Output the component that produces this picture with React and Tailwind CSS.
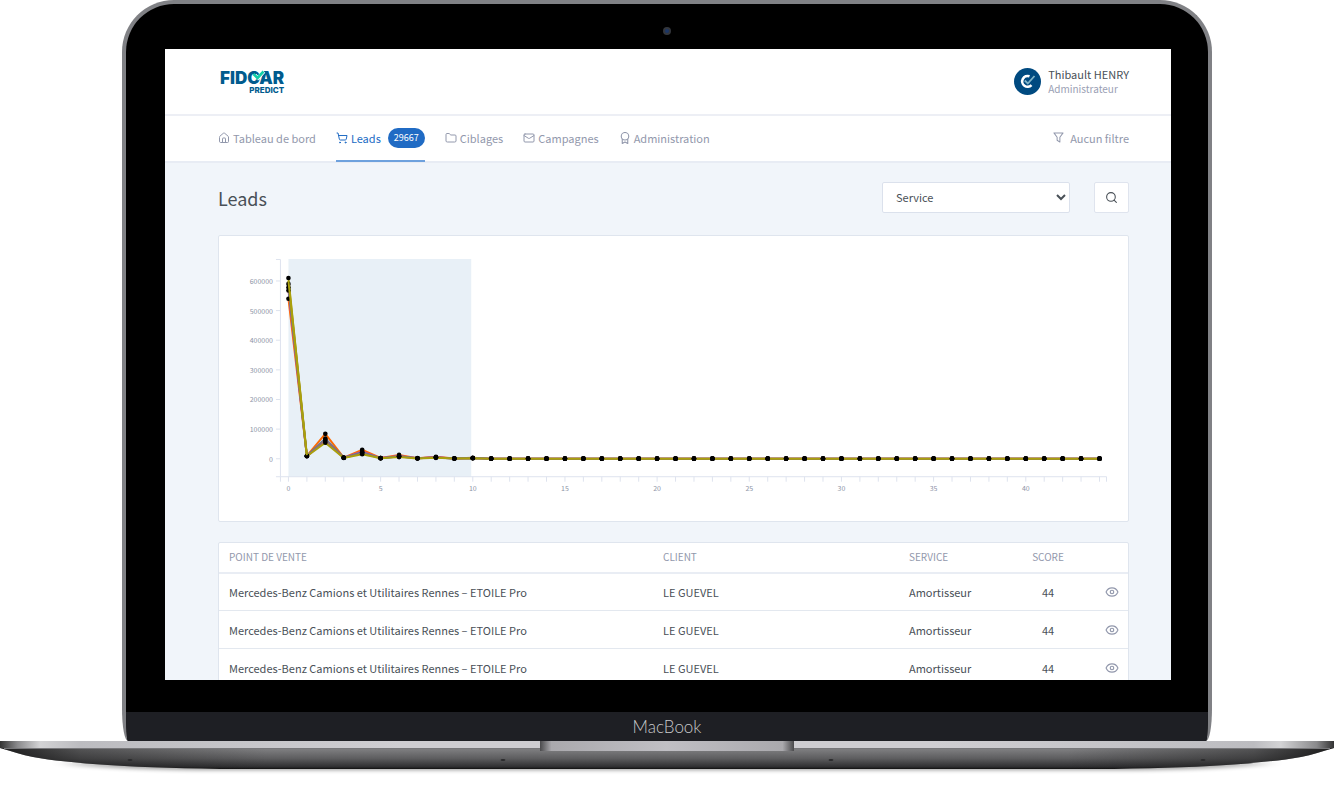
import { useState } from "react";
import { House, ShoppingCart, Folder, Mail, Search, Eye } from "lucide-react";

const tabs = [
  { id: "dashboard", label: "Tableau de bord", icon: House },
  { id: "leads", label: "Leads", icon: ShoppingCart, count: 29667 },
  { id: "targets", label: "Ciblages", icon: Folder },
  { id: "campaigns", label: "Campagnes", icon: Mail },
  { id: "admin", label: "Administration", icon: AwardIcon },
];

const leads = [1, 2, 3].map((id) => ({
  id,
  dealer: "Mercedes-Benz Camions et Utilitaires Rennes – ETOILE Pro",
  client: "LE GUEVEL",
  service: "Amortisseur",
  score: 44,
}));

// Leads per score, first values of each series. The tail is flat.
const series = [
  { color: "#ff6a00", values: [540000, 9500, 84000, 4000, 30000, 2500, 13000, 2000, 6500, 1200, 3500] },
  { color: "#e0409a", values: [568000, 9000, 60000, 3500, 24000, 2200, 9000, 1500, 5000, 1000, 2500] },
  { color: "#4b7fa3", values: [578000, 9000, 68000, 3500, 22000, 2000, 8500, 1500, 4500, 1000, 2200] },
  { color: "#8a6f7a", values: [590000, 9000, 65000, 3200, 19000, 2000, 7500, 1300, 4000, 900, 2000] },
  { color: "#aaa00c", values: [610000, 8500, 54000, 2800, 15000, 1500, 5500, 1000, 3000, 600, 1500] },
];

const X0 = 69.5;
const Y0 = 223;
const MAX_SCORE = 44;
const scores = Array.from({ length: MAX_SCORE + 1 }, (_, i) => i);
const px = (score) => X0 + (score * 812) / MAX_SCORE;
const py = (count) => Y0 - (count * 178) / 600000;

function AwardIcon({ size = 12 }) {
  return (
    <svg width={size} height={size} viewBox="0 0 24 24" fill="none" stroke="currentColor" strokeWidth="2.2" strokeLinejoin="round">
      <circle cx="12" cy="8.5" r="7.5" />
      <path d="M6.5 13.5V23l5.5-3 5.5 3v-9.5" />
    </svg>
  );
}

function FunnelIcon() {
  return (
    <svg width="11" height="11" viewBox="0 0 24 24" fill="none" stroke="currentColor" strokeWidth="2.2" strokeLinejoin="round">
      <path d="M2 2h20l-7 9.5V22l-6-4v-6.5z" />
    </svg>
  );
}

function Logo() {
  return (
    <a href="#" aria-label="Fidcar Predict" className="relative flex flex-col items-end font-[Inter,sans-serif] text-[#005b8e]">
      <span className="text-[17px] leading-4 font-black">FIDCAR</span>
      <span className="text-[8px] leading-2 font-extrabold">PREDICT</span>
      <svg width="15" height="11" viewBox="0 0 15 11" fill="none" className="absolute top-0 left-8">
        <path d="M3 5l3 3L12 1.5" stroke="#fff" strokeWidth="3.4" />
        <path d="M1.5 4l4 4L11.5 1.5" stroke="#12cfa8" strokeWidth="2.6" />
      </svg>
    </a>
  );
}

function Avatar() {
  return (
    <svg width="27" height="27" viewBox="0 0 27 27" fill="none">
      <circle cx="13.5" cy="13.5" r="13.5" fill="#004a80" />
      <path d="M15.5 8.3a5.4 5.4 0 1 0 2 8.8" stroke="#fff" strokeWidth="2.6" />
      <path d="M10.8 12.5l3 3L20.5 8" stroke="#7fb4c8" strokeWidth="1.8" />
    </svg>
  );
}

function ScoreChart() {
  return (
    <svg viewBox="0 0 910 285" className="block w-full" role="img" aria-label="Leads par score">
      <rect x="69.5" y="23" width="183" height="218" fill="#e8f0f7" />

      {/* Axes */}
      <g stroke="#dee3ee" fill="none">
        <path d="M57 23.5h4.5v217.5" />
        <path d="M57 241h831.5v5M61.5 241v5" />
        {[0, 1, 2, 3, 4, 5, 6].map((n) => (
          <path key={n} d={`M57 ${py(n * 100000)}h4.5`} />
        ))}
        {scores.map((s) => (
          <path key={s} d={`M${px(s)} 241v5`} />
        ))}
      </g>
      <g fill="#8d93a6" fontSize="7">
        {[0, 1, 2, 3, 4, 5, 6].map((n) => (
          <text key={n} x="54" y={py(n * 100000) + 3} textAnchor="end">
            {n * 100000}
          </text>
        ))}
        {scores.filter((s) => s % 5 === 0).map((s) => (
          <text key={s} x={px(s)} y="255" textAnchor="middle">
            {s}
          </text>
        ))}
      </g>

      {/* Series */}
      {series.map(({ color, values }) => (
        <polyline
          key={color}
          points={scores.map((s) => `${px(s)},${py(values[s] ?? 300)}`).join(" ")}
          fill="none"
          stroke={color}
          strokeWidth="2"
        />
      ))}
      {series.map(({ color, values }) =>
        scores.map((s) => <circle key={`${color}${s}`} cx={px(s)} cy={py(values[s] ?? 300)} r="2.3" />)
      )}
      <path d={`M${px(0)} ${py(600000)}L${px(1)} ${py(12000)}`} stroke="#aaa00c" strokeWidth="2" />
    </svg>
  );
}

function Dashboard() {
  const [active, setActive] = useState("leads");

  return (
    <div className="h-[631px] overflow-hidden bg-[#f1f5fa] text-[11px] leading-4 text-[#495057]">
      {/* Header */}
      <header className="flex h-[67px] items-center justify-between border-b-2 border-[#edeff5] bg-white pr-[42px] pl-[55px]">
        <Logo />
        <div className="flex items-center gap-[7px]">
          <Avatar />
          <div>
            <p className="leading-[15px]">Thibault HENRY</p>
            <p className="text-[10px] leading-[14px] text-[#9aa0b4]">Administrateur</p>
          </div>
        </div>
      </header>

      {/* Navigation */}
      <nav className="flex h-[47px] items-stretch justify-between border-b-2 border-[#e8ecf4] bg-white pr-[42px] pl-[53px] text-[#9298ac]">
        <div className="flex gap-5">
          {tabs.map(({ id, label, icon: Icon, count }) => (
            <button
              key={id}
              type="button"
              onClick={() => setActive(id)}
              className={`-mb-px flex items-center gap-[3px] border-b-2 ${
                active === id ? "border-[#6ea1dd] text-[#206bc4]" : "border-transparent"
              }`}
            >
              <Icon size={12} />
              {label}
              {count && (
                <span className="ml-1 rounded-full bg-[#206bc4] px-[6px] text-[9px] leading-5 text-white">{count}</span>
              )}
            </button>
          ))}
        </div>
        <button type="button" className="flex items-center gap-[6px] border-b-2 border-transparent">
          <FunnelIcon />
          Aucun filtre
        </button>
      </nav>

      <main className="pr-[42px] pl-[53px]">
        {/* Title and search */}
        <div className="flex items-center pt-[19px] pb-[22px]">
          <h1 className="flex-1 text-[18px] leading-6">Leads</h1>
          <select
            aria-label="Service"
            defaultValue="service"
            className="mr-6 h-[31px] w-[188px] rounded-xs border border-[#dbe1ec] bg-white pb-[2px] pl-[9px]"
          >
            <option value="service">Service</option>
          </select>
          <button
            type="button"
            aria-label="Rechercher"
            className="flex h-[31px] w-[35px] items-center justify-center rounded-xs border border-[#dfe4ee] bg-white"
          >
            <Search size={13} />
          </button>
        </div>

        {/* Chart */}
        <section className="rounded-xs border border-[#dfe5ee] bg-white">
          <ScoreChart />
        </section>

        {/* Leads table */}
        <section className="mt-5 rounded-xs border border-[#dfe5ee] bg-white">
          <table className="w-full table-fixed text-left">
            <colgroup>
              <col />
              <col className="w-[246px]" />
              <col className="w-[115px]" />
              <col className="w-[68px]" />
              <col className="w-[46px]" />
            </colgroup>
            <thead className="text-[10px] text-[#9298ac]">
              <tr className="h-[30px] border-b-2 border-[#e9edf4]">
                <th className="pl-[10px] font-normal">POINT DE VENTE</th>
                <th className="pl-[10px] font-normal">CLIENT</th>
                <th className="pl-[10px] font-normal">SERVICE</th>
                <th className="text-center font-normal">SCORE</th>
                <th />
              </tr>
            </thead>
            <tbody>
              {leads.map((lead) => (
                <tr key={lead.id} className="h-[38px] border-b border-[#e3e8ef]">
                  <td className="pl-[10px]">{lead.dealer}</td>
                  <td className="pl-[10px]">{lead.client}</td>
                  <td className="pl-[10px]">{lead.service}</td>
                  <td className="text-center">{lead.score}</td>
                  <td>
                    <button type="button" aria-label="Voir" className="mr-[9px] ml-auto block text-[#9298ac]">
                      <Eye size={14} />
                    </button>
                  </td>
                </tr>
              ))}
            </tbody>
          </table>
        </section>
      </main>
    </div>
  );
}

const BASE_SHAPE =
  "M0 7C12 10 22 14 33 16 55 20 80 22 100 23.5 130 26 170 27 220 28H1114C1164 27 1204 26 1234 23.5 1254 22 1279 20 1301 16 1312 14 1322 10 1334 7z";

function LaptopBase() {
  return (
    <svg viewBox="0 0 1334 51" preserveAspectRatio="none" className="block h-[51px] w-full" aria-hidden="true">
      <defs>
        <linearGradient id="body" x1="0" y1="0" x2="0" y2="1">
          <stop offset="0" stopColor="#828284" />
          <stop offset="0.5" stopColor="#5d5d5f" />
          <stop offset="0.9" stopColor="#2f2f31" />
          <stop offset="1" stopColor="#111" />
        </linearGradient>
        <linearGradient id="ends" x1="0" y1="0" x2="1" y2="0">
          <stop offset="0" stopColor="#111" stopOpacity="0.9" />
          <stop offset="0.06" stopColor="#111" stopOpacity="0.4" />
          <stop offset="0.2" stopColor="#111" stopOpacity="0" />
          <stop offset="0.8" stopColor="#111" stopOpacity="0" />
          <stop offset="0.94" stopColor="#111" stopOpacity="0.4" />
          <stop offset="1" stopColor="#111" stopOpacity="0.9" />
        </linearGradient>
        <linearGradient id="edge" x1="0" y1="0" x2="1" y2="0">
          <stop offset="0" stopColor="#333" />
          <stop offset="0.013" stopColor="#8a8a8c" />
          <stop offset="0.03" stopColor="#d3d3d5" />
          <stop offset="0.06" stopColor="#bcbcc0" />
          <stop offset="0.3" stopColor="#cfced2" />
          <stop offset="0.7" stopColor="#cfced2" />
          <stop offset="0.94" stopColor="#bcbcc0" />
          <stop offset="0.96" stopColor="#d3d3d5" />
          <stop offset="0.987" stopColor="#8a8a8c" />
          <stop offset="1" stopColor="#333" />
        </linearGradient>
        <linearGradient id="notch" x1="0" y1="0" x2="1" y2="0">
          <stop offset="0" stopColor="#4a4a4c" />
          <stop offset="0.045" stopColor="#aaa9ad" />
          <stop offset="0.5" stopColor="#c0bfc4" />
          <stop offset="0.955" stopColor="#aaa9ad" />
          <stop offset="1" stopColor="#4a4a4c" />
        </linearGradient>
        <filter id="soft" x="-10%" y="-200%" width="120%" height="500%">
          <feGaussianBlur stdDeviation="8 2" />
        </filter>
      </defs>
      <path d="M60 22h1214q-60 7-160 7H220q-100 0-160-7z" fill="#000" opacity="0.4" filter="url(#soft)" />
      <path d={BASE_SHAPE} fill="url(#body)" />
      <path d={BASE_SHAPE} fill="url(#ends)" />
      <rect width="1334" height="7" fill="url(#edge)" />
      <rect x="4" y="7" width="1326" height="1" fill="#77777a" />
      <rect x="540" width="254" height="10" fill="url(#notch)" />
      {[130, 503, 831, 1203].map((x) => (
        <ellipse key={x} cx={x} cy="19" rx="2.5" ry="1" fill="#2a2a2c" />
      ))}
    </svg>
  );
}

const App = () => {
  return (
    <div className="overflow-hidden bg-white font-['Noto_Sans_CJK_SC','Noto_Sans',sans-serif]">
      {/* Lid */}
      <div className="mr-[122px] ml-[122px] overflow-hidden rounded-t-[52px] rounded-b-[6px_32px] border-4 border-b-0 border-[#808185] bg-black">
        <div className="flex h-[45px] items-center justify-center pt-2">
          <span className="flex size-2 items-center justify-center rounded-full bg-[#33363c]">
            <span className="size-1 rounded-full bg-[#1d3767]" />
          </span>
        </div>
        <div className="mr-[37px] ml-[39px]">
          <Dashboard />
        </div>
        <div className="h-8" />
        <div className="flex h-[29px] items-center justify-center bg-[#1e1f24] font-[Lato,sans-serif] text-[17px] leading-6 font-light text-[#c9c9cb]">
          MacBook
        </div>
      </div>
      <LaptopBase />
    </div>
  );
};

export default App;
